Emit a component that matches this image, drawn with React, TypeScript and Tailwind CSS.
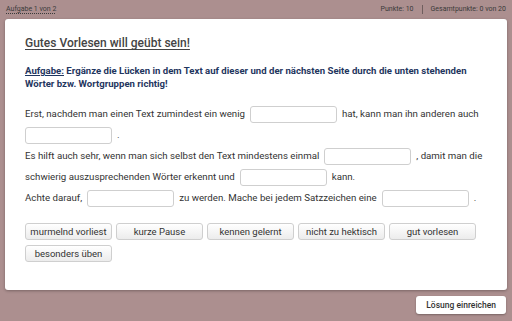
import React from "react";

const Gap = ({ first = false }: { first?: boolean }) => (
  <span className={"inline-block align-middle h-[17px] w-[87px] rounded-[3px] border border-[#cfcfcf] bg-white " + (first ? "mr-[5px]" : "mx-[5px]")} />
);

const words = ["murmelnd vorliest", "kurze Pause", "kennen gelernt", "nicht zu hektisch", "gut vorlesen", "besonders üben"];

export default function App() {
  return (
    <div className="w-[512px] h-[321px] bg-[#ac8f8f] flex flex-col overflow-hidden" style={{ fontFamily: "Roboto, 'Liberation Sans', sans-serif" }}>
      <div className="h-[19px] flex items-center justify-between px-[6px] text-[7px] text-[#3a3a3a]">
        <span className="underline decoration-dotted underline-offset-2">Aufgabe 1 von 2</span>
        <div className="flex items-center">
          <span>Punkte: 10</span>
          <span className="mx-[8px] h-[9px] w-px bg-[#6f5e5e]" />
          <span>Gesamtpunkte: 0 von 20</span>
        </div>
      </div>
      <div className="mx-[5px] h-[271px] bg-white rounded-[3px] shadow-[0_1px_3px_rgba(0,0,0,0.3)] px-[20px] pt-[16px]">
        <h1 className="text-[12px] font-medium text-[#444] underline underline-offset-2 leading-[16px]">Gutes Vorlesen will geübt sein!</h1>
        <p className="mt-[13px] pr-[10px] text-[9.6px] font-bold text-[#1f3660] leading-[13px]">
          <span className="underline">Aufgabe:</span> Ergänze die Lücken in dem Text auf dieser und der nächsten Seite durch die unten stehenden Wörter bzw. Wortgruppen richtig!
        </p>
        <div className="mt-[13px] text-[9.7px] text-[#333] leading-[21px]">
          <div>Erst, nachdem man einen Text zumindest ein wenig<Gap />hat, kann man ihn anderen auch</div>
          <div><Gap first />.</div>
          <div>Es hilft auch sehr, wenn man sich selbst den Text mindestens einmal<Gap />, damit man die</div>
          <div>schwierig auszusprechenden Wörter erkennt und<Gap />kann.</div>
          <div>Achte darauf,<Gap />zu werden. Mache bei jedem Satzzeichen eine<Gap />.</div>
        </div>
        <div className="mt-[15px] flex flex-wrap gap-x-[4px] gap-y-[5px] w-[460px]">
          {words.map((w) => (
            <button key={w} className="w-[87px] h-[17px] rounded-[3px] border border-[#cfcfcf] bg-gradient-to-b from-white to-[#ececec] text-[9.5px] text-[#333] leading-none">
              {w}
            </button>
          ))}
        </div>
      </div>
      <div className="flex justify-end px-[6px] pt-[6px]">
        <button className="h-[18px] px-[10px] rounded-[3px] bg-white text-[8.5px] font-medium text-[#333] shadow-[0_1px_2px_rgba(0,0,0,0.3)]">Lösung einreichen</button>
      </div>
    </div>
  );
}
